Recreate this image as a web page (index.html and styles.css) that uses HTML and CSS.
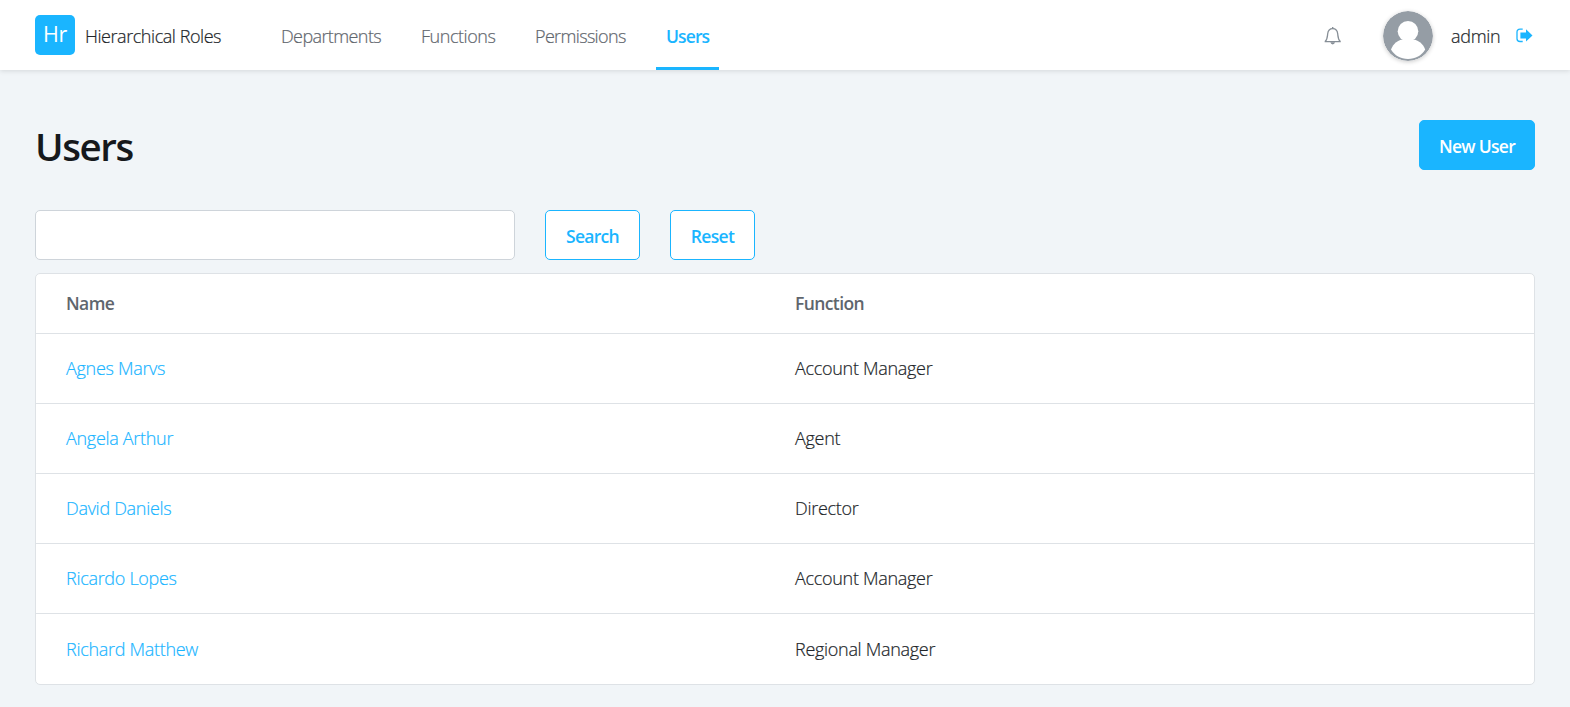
FILE: index.html
```html
<!DOCTYPE html>
<html lang="en">
<head>
<meta charset="utf-8">
<title>Users - Hierarchical Roles</title>
<link rel="stylesheet" href="styles.css">
</head>
<body>
<header class="navbar">
  <a class="brand"><span class="brand-logo">Hr</span><span class="brand-name">Hierarchical Roles</span></a>
  <nav class="nav">
    <a class="nav-link departments">Departments</a>
    <a class="nav-link functions">Functions</a>
    <a class="nav-link permissions">Permissions</a>
    <a class="nav-link active">Users</a>
  </nav>
  <div class="account">
    <svg class="bell" viewBox="0 0 18 20" fill="none" stroke="#868e96"><path d="M1.3 15.2C3.4 13.5 3.3 11.3 3.7 7.7C4 4.7 5.8 2.6 8.7 2.6S13.4 4.7 13.7 7.7C14.1 11.3 14 13.5 16.1 15.2V15.7H1.3Z" stroke-width="1.3"/><path d="M8.7 1V2.7" stroke-width="1.4"/><path d="M6.3 16.3H11.1Q10.5 18.4 8.7 18.4Q6.9 18.4 6.3 16.3Z" fill="#868e96" stroke="none"/></svg>
    <svg class="avatar" viewBox="0 0 50 50"><circle cx="25" cy="25" r="25" fill="#959da5"/><path d="M8 38.5C10.3 33 14.5 29.2 20 28.6H30C35.5 29.2 40 33 42.2 38.5C38.5 44.5 32.5 48 25 48S11.7 44.5 8 38.5Z" fill="#fff"/><circle cx="25" cy="20.2" r="10.3" fill="#fff"/></svg>
    <span class="username">admin</span>
    <svg class="logout" viewBox="0 0 17 15" fill="none"><path d="M6.7 1.2H4Q1 1.2 1 4V10.7Q1 13.5 4 13.5H6.7" stroke="#1ab5ff" stroke-width="1.3"/><path d="M10 1.2L16.5 7.4L10 13.6V10.4H4.4V4.4H10Z" fill="#1ab5ff"/></svg>
  </div>
</header>
<main class="page">
  <div class="page-head">
    <h1 class="title">Users</h1>
    <button class="btn btn-primary">New User</button>
  </div>
  <form class="filters">
    <input class="search-input" type="text" aria-label="Search">
    <button class="btn btn-outline search" type="button">Search</button>
    <button class="btn btn-outline reset" type="button">Reset</button>
  </form>
  <section class="list">
    <div class="row head"><span>Name</span><span>Function</span></div>
    <div class="row"><a>Agnes Marvs</a><span>Account Manager</span></div>
    <div class="row"><a>Angela Arthur</a><span>Agent</span></div>
    <div class="row"><a>David Daniels</a><span>Director</span></div>
    <div class="row"><a>Ricardo Lopes</a><span>Account Manager</span></div>
    <div class="row last"><a>Richard Matthew</a><span>Regional Manager</span></div>
  </section>
</main>
</body>
</html>
```
FILE: styles.css
```css
* { box-sizing: border-box; }
body {
  margin: 0;
  min-height: 707px;
  background: #f1f5f8;
  color: #212529;
  font: 300 18px/27px "Open Sans", "Noto Sans", sans-serif;
  letter-spacing: -0.3px;
  white-space: nowrap;
  -webkit-text-stroke: 0.2px;
}
.navbar {
  display: flex;
  align-items: center;
  height: 70px;
  padding: 0 35px;
  background: #fff;
  box-shadow: 0 1px 5px rgba(0, 0, 0, .12);
}
.brand { display: flex; align-items: center; gap: 10px; width: 236px; }
.brand-name { padding-top: 2px; letter-spacing: -0.45px; }
.brand-logo {
  width: 40px;
  height: 40px;
  border-radius: 5px;
  background: #1ab5ff;
  color: #fff;
  font: 400 21.5px/37px "Open Sans", sans-serif;
  letter-spacing: -0.4px;
  text-align: center;
  -webkit-text-stroke: 0;
}
.nav { display: flex; height: 70px; gap: 20px; letter-spacing: -0.6px; }
.nav-link {
  display: flex;
  align-items: center;
  padding: 5px 10px 0;
  border-bottom: 3px solid transparent;
  color: #5f666d;
}
.departments { width: 120px; }
.functions { width: 94px; letter-spacing: -0.45px; }
.permissions { width: 111px; letter-spacing: -0.65px; }
.nav-link.active { width: 63px; border-color: #1ab5ff; color: #1ab5ff; font-size: 17.5px; font-weight: 600; letter-spacing: -0.9px; -webkit-text-stroke: 0; }
.account { display: flex; align-items: center; margin-left: auto; }
.bell { width: 18px; height: 20px; margin: 2px 41px 0 0; }
.avatar { width: 50px; height: 50px; margin: 2px 18px 0 0; border-radius: 50%; box-shadow: 0 1px 4px rgba(0, 0, 0, .2); }
.username { width: 65px; padding-top: 2px; }
.logout { width: 17px; height: 15px; margin-right: 2px; }
.page { padding: 50px 35px 0; }
.page-head { display: flex; justify-content: space-between; height: 90px; }
.title { margin: 0; font-size: 38.5px; line-height: 52px; font-weight: 600; letter-spacing: -1.4px; color: #16191c; -webkit-text-stroke: 0; }
.btn {
  height: 50px;
  padding: 3px 0 0;
  border: 1px solid #1ab5ff;
  border-radius: 5px;
  font: inherit;
  font-size: 17.5px;
  font-weight: 600;
  letter-spacing: -0.7px;
  -webkit-text-stroke: 0;
}
.btn-primary { width: 116px; background: #1ab5ff; color: #fff; }
.btn-outline { background: #fff; color: #1ab5ff; }
.filters { display: flex; gap: 30px; margin-bottom: 13px; }
.search-input { width: 480px; height: 50px; border: 1px solid #ced4da; border-radius: 5px; background: #fff; }
.search { width: 95px; }
.reset { width: 85px; }
.list { border: 1px solid #dee2e6; border-radius: 5px; background: #fff; }
.row { display: grid; grid-template-columns: 729px 1fr; align-items: center; height: 70px; padding: 0 30px; border-bottom: 1px solid #dee2e6; }
.row a { color: #1ab5ff; }
.row.head { height: 60px; color: #5f666d; font-size: 17.5px; font-weight: 600; letter-spacing: -0.6px; -webkit-text-stroke: 0; }
.row.last { border-bottom: 0; padding-top: 1px; }
```
